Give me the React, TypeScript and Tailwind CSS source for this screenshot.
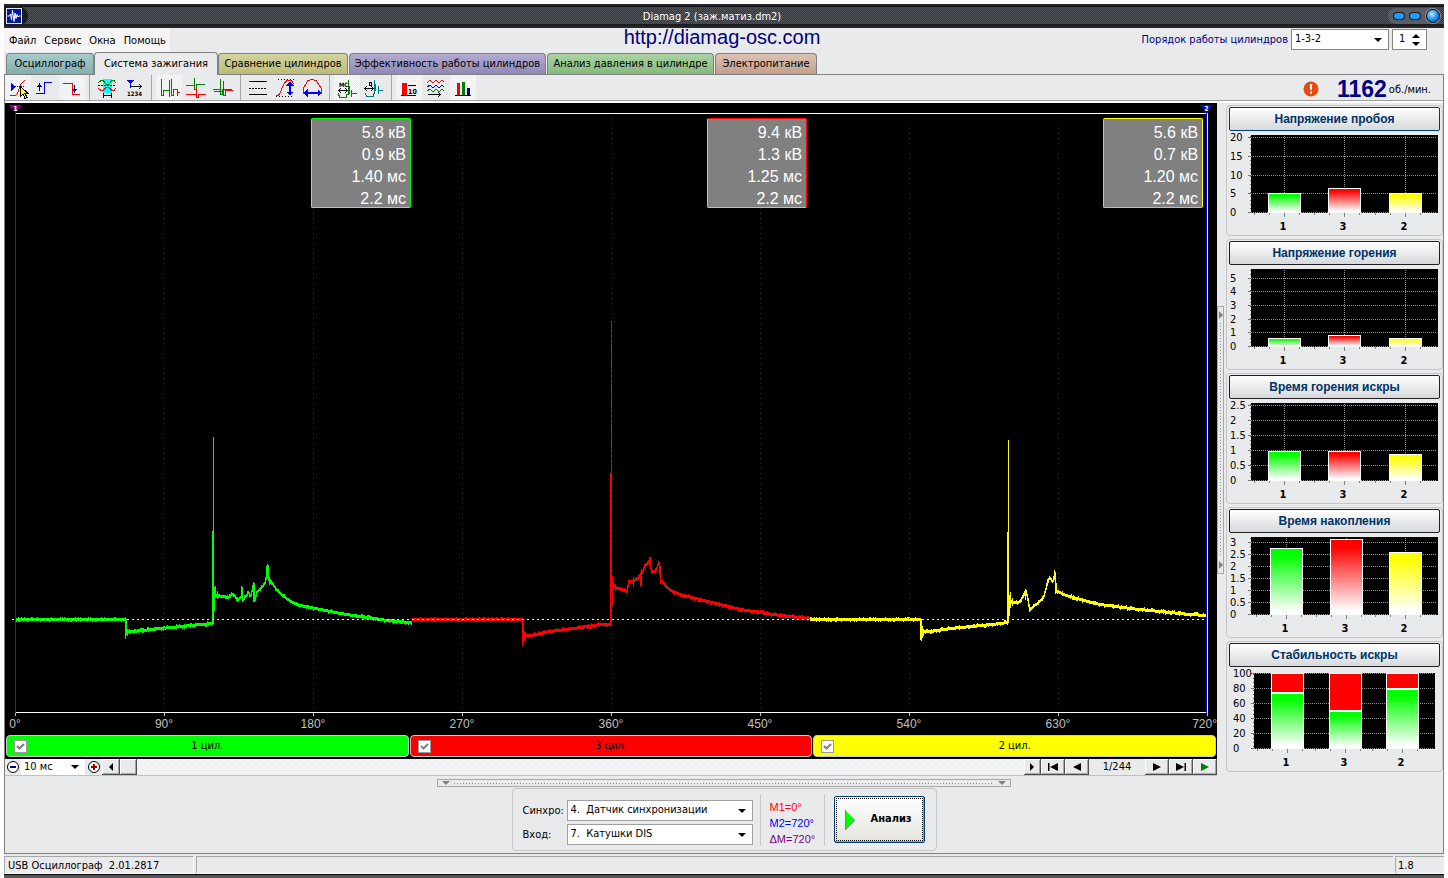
import React from "react";

type Pt = [number, number];
type Spike = [number, number, number];

const GREEN: Pt[] = [
  [15, 619], [125, 619], [126, 631], [132, 631], [160, 628], [200, 624], [212, 623], [214, 596], [217, 595], [222, 596],
  [228, 597], [231, 594], [234, 595], [237, 600], [240, 597], [241, 588], [242, 600], [245, 596], [248, 592], [250, 595],
  [252, 586], [253, 583], [254, 600], [256, 592], [260, 588], [264, 583], [266, 572], [267, 565], [268, 578], [269, 583],
  [270, 580], [275, 588], [280, 593], [290, 601], [300, 605], [320, 609], [340, 613], [360, 616], [380, 619], [395, 621], [412, 622],
];
const RED: Pt[] = [
  [412, 619], [522, 619], [523, 635], [530, 635], [550, 631], [580, 627], [600, 624], [610, 624], [612, 583], [616, 588],
  [620, 588], [626, 591], [628, 581], [633, 581], [640, 575], [644, 566], [648, 562], [649, 558], [650, 568], [652, 572],
  [655, 570], [658, 563], [659, 566], [660, 580], [665, 585], [670, 590], [680, 594], [700, 599], [720, 604], [740, 609],
  [760, 612], [780, 615], [800, 617], [810, 618],
];
const YELLOW: Pt[] = [
  [810, 619], [920, 619], [921, 631], [930, 631], [950, 628], [980, 625], [1000, 623], [1007, 622], [1010, 600], [1012, 602],
  [1018, 602], [1022, 597], [1025, 590], [1027, 598], [1029, 609], [1032, 607], [1040, 600], [1043, 596], [1047, 581], [1049, 577],
  [1052, 581], [1054, 572], [1055, 583], [1056, 590], [1060, 592], [1066, 595], [1080, 599], [1100, 604], [1130, 608], [1160, 611],
  [1190, 614], [1206, 615],
];
const GREEN_SPIKES: Spike[] = [
  [125, 619, 639], [126, 626, 635], [127, 629, 636], [129, 629, 634], [212, 531, 624], [213, 437, 624], [214, 587, 606], [215, 586, 596],
  [217, 591, 599], [241, 587, 595], [253, 582, 602], [266, 566, 580], [267, 564, 578],
];
const RED_SPIKES: Spike[] = [
  [522, 619, 646], [523, 627, 642], [524, 631, 641], [525, 632, 639], [610, 473, 625], [611, 321, 593], [612, 576, 589], [613, 582, 590],
  [615, 584, 591], [633, 577, 587], [640, 572, 586], [641, 569, 587], [649, 558, 566], [659, 562, 575], [660, 575, 584],
];
const YELLOW_SPIKES: Spike[] = [
  [920, 619, 640], [921, 622, 641], [922, 626, 638], [923, 629, 636], [1007, 532, 623], [1008, 440, 622], [1009, 595, 613], [1010, 592, 606],
  [1012, 598, 606], [1025, 589, 600], [1054, 570, 580], [1055, 580, 594], [1056, 583, 593],
];

function trace(points: Pt[], spikes: Spike[], seed: number): string {
  let s = seed;
  const rand = () => {
    s = (s * 1103515245 + 12345) % 2147483648;
    return s / 2147483648;
  };
  let d = "";
  let prev = points[0][1];
  for (let i = 0; i < points.length - 1; i++) {
    const [x0, y0] = points[i];
    const [x1, y1] = points[i + 1];
    for (let x = x0; x < x1; x++) {
      const y = Math.round(y0 + ((y1 - y0) * (x - x0)) / (x1 - x0));
      const top = Math.min(y - 1, prev) - (rand() > 0.82 ? 1 : 0);
      const bottom = Math.max(y + 2, prev + 1) + (rand() > 0.82 ? 1 : 0);
      d += `M${x - 4.5} ${top - 103}V${bottom - 103}`;
      prev = y;
    }
  }
  for (const [x, a, b] of spikes) d += `M${x - 4.5} ${a - 103}V${b - 103}`;
  return d;
}

const DITHER = "bg-[repeating-conic-gradient(#ffffff_0_25%,#e9eaec_0_50%)] bg-[length:2px_2px]";

function Caret({ className = "" }: { className?: string }) {
  return (
    <svg className={`pointer-events-none h-1 w-2 ${className}`} viewBox="0 0 8 4" aria-hidden="true">
      <path d="M0 0H8L4 4Z" fill="#000" />
    </svg>
  );
}

function Picker({ label, value, options, className }: { label: string; value: string; options: string[]; className: string }) {
  return (
    <span className={`relative flex items-center bg-white ${className}`}>
      <select aria-label={label} defaultValue={value} className="h-full w-full appearance-none bg-transparent pl-[3px] pr-4 outline-none">
        {options.map((o) => (
          <option key={o} value={o}>{o}</option>
        ))}
      </select>
      <Caret className="absolute right-1.5" />
    </span>
  );
}

/* ---------- Title bar and menu ---------- */

function TitleBar() {
  return (
    <header className="relative flex h-6 items-center justify-center border-y-2 border-[#26272a] bg-[repeating-conic-gradient(#33353a_0_25%,#55585d_0_50%)] bg-[length:2px_2px] pr-6 pt-0.5 text-[11px] text-white shadow-[inset_0_1px_0_#101112,inset_0_-2px_0_#1c1d1f]">
      <span className="absolute left-0 top-0 flex h-5 w-6 items-center rounded-r-full bg-[#1b1c1e]">
        <svg className="ml-0.5 h-4 w-4" viewBox="0 0 16 16" aria-hidden="true">
          <rect x="0.5" y="0.5" width="15" height="15" fill="#0018a0" stroke="#dfe6ff" />
          <path d="M1.500 8H3.500L4.500 6L5.500 12L6.500 2.500L8 13.500L9 5L10 10.500L11 6.500L12 9L13 8H14.500" fill="none" stroke="#fff" />
        </svg>
      </span>
      <h1>Diamag 2 (заж.матиз.dm2)</h1>
      <span className="absolute right-1 top-0.5 flex h-4 items-center gap-1.5 rounded-full bg-[#5a5d63] pl-1.5">
        <button aria-label="Свернуть" className="h-1.5 w-2.5 rounded-sm bg-[#1b9dff] shadow-[0_0_0_1px_#12161c]" />
        <button aria-label="Развернуть" className="h-1.5 w-2.5 rounded-sm bg-[#1b9dff] shadow-[0_0_0_1px_#12161c]" />
        <button aria-label="Закрыть" className="h-3.5 w-3.5 rounded-full border border-[#12161c] bg-[radial-gradient(circle_at_40%_35%,#bfe4ff,#1187f0_55%,#0850a8)] shadow-[0_0_0_1px_#8a8e95]" />
      </span>
    </header>
  );
}

function MenuRow() {
  return (
    <div className="grid h-6 grid-cols-[1fr_auto_1fr] items-start">
      <nav className="flex h-6 w-[166px] items-center gap-2 bg-[#f5f5f5] pl-[5px] pt-0.5 text-[11px]">
        {["Файл", "Сервис", "Окна", "Помощь"].map((m) => (
          <button key={m}>{m}</button>
        ))}
      </nav>
      <a href="http://diamag-osc.com" className="-mt-[5px] pr-1 pt-0.5 font-[Liberation_Sans] text-[20px] leading-6 text-[#000080]">
        http://diamag-osc.com
      </a>
      <div className="flex items-center justify-end gap-[3px] pr-[17px] pt-px text-[11px]">
        <span className="pt-0.5 text-[#000080]">Порядок работы цилиндров</span>
        <Picker label="Порядок работы цилиндров" value="1-3-2" options={["1-3-2", "1-2-3"]} className="h-[21px] w-[98px] border border-[#858585]" />
        <span className="relative flex h-[21px] w-[35px] items-center border border-[#858585] bg-white">
          <input aria-label="Цилиндр" defaultValue="1" className="w-full bg-transparent pl-1.5 outline-none" />
          <svg className="absolute right-1.5 h-3 w-2" viewBox="0 0 8 12" aria-hidden="true">
            <path d="M4 0L8 4H0ZM4 12L0 8H8Z" fill="#000" />
          </svg>
        </span>
      </div>
    </div>
  );
}

const TABS: [string, string][] = [
  ["Осциллограф", "w-[88px] h-[21px] from-[#a9cccc] to-[#84adad]"],
  ["Система зажигания", "w-[124px] h-[23px] from-[#e9eaec] to-[#e9eaec]"],
  ["Сравнение цилиндров", "w-[130px] h-[21px] from-[#d3d3a0] to-[#bcbc78]"],
  ["Эффективность работы цилиндров", "w-[197px] h-[21px] from-[#b3abd0] to-[#9089b5]"],
  ["Анализ давления в цилиндре", "w-[167px] h-[21px] from-[#abd3a4] to-[#86b97b]"],
  ["Электропитание", "w-[102px] h-[21px] from-[#dcc3b4] to-[#c2a08c]"],
];

function Tabs() {
  return (
    <div role="tablist" className="flex h-[23px] items-end border-b border-[#808080] pl-0.5 text-[11px]">
      {TABS.map(([name, look], i) => (
        <button
          key={name}
          role="tab"
          aria-selected={i === 1}
          className={`shrink-0 whitespace-nowrap rounded-t border border-b-0 border-[#808080] bg-linear-to-b ${look} ${i === 1 ? "-mb-px" : ""} ${i > 2 ? "ml-px" : ""}`}
        >
          {name}
        </button>
      ))}
    </div>
  );
}

/* ---------- Toolbar ---------- */

const R = "#ff0000";
const G = "#008000";
const B = "#0000ff";
const N = "#000080";
const K = "#000000";

type Tool = { name: string; on?: boolean; art: React.ReactNode };

const TOOLS: Tool[][] = [
  [
    {
      name: "Курсор",
      on: true,
      art: (
        <>
          <path d="M5 19.500H10C14 19 13 12 16 8L20 4" stroke={R} />
          <path d="M6 10.500H20" stroke={B} strokeDasharray="1 1" />
          <path d="M6 7V15L10 11Z" fill={B} />
          <path d="M15.500 10.500V20.500L18 18L20 22.500L22 21.500L20 17.500H23Z" fill="#ff0" stroke={K} />
        </>
      ),
    },
    { name: "Фронт", art: <><path d="M4 17.500H12.500V6.500H20" stroke={B} /><path d="M7.500 15V8" stroke={N} /><path d="M5 11L7.500 7L10 11Z" fill={N} /></> },
    { name: "Спад", on: true, art: <><path d="M4 7.500H13.500V18.500H21" stroke={R} /><path d="M15.500 9V16" stroke={N} /><path d="M13 13H18L15.500 17Z" fill={N} /></> },
  ],
  [
    {
      name: "Окно",
      art: (
        <>
          <rect x="9" y="3" width="9" height="14" fill="#0ff" />
          <path d="M4 7L7 4.500H9L12 8H15L18 4.500H20L22 7" stroke={G} />
          <path d="M4 9.500H22" stroke={K} strokeDasharray="2 1" />
          <path d="M4 12L7 14.500H9L12 11.500H15L18 14.500H20L22 12" stroke={R} />
          <path d="M9.500 17V22M17.500 17V22M10 19.500H17" stroke={N} />
        </>
      ),
    },
    {
      name: "Нумерация",
      art: (
        <>
          <path d="M6 4H13L9.500 8Z" fill={B} />
          <path d="M9.500 7V12" stroke={B} />
          <path d="M10 10.500H21M18 8L20.500 10.500L18 13" stroke={K} />
          <text x="6" y="20" fontSize="6" fontWeight="700" fill={K}>1234</text>
        </>
      ),
    },
  ],
  [
    { name: "Последовательно", on: true, art: <><path d="M5.500 3V19.500H7.500V14.500H13.500V21V4" stroke={G} /><path d="M15.500 3V19.500H17.500V13.500H21.500V20M22 16.500H24" stroke={R} /></> },
    { name: "Друг под другом", art: <><path d="M3 9.500H11.500V2V13H13.500V8.500H22" stroke={G} /><path d="M3 18.500H13.500V12V21.500H15.500V18.500H23" stroke={R} /></> },
    { name: "Наложение", art: <><path d="M3 13.500H10.500V3V18.500H12.500V13.500H22" stroke={G} /><path d="M4 15.500H13.500V5V19.500H15.500V14.500H23" stroke={R} /></> },
  ],
  [
    { name: "Линии", art: <><path d="M4 5.500H22M4 18.500H22" stroke={K} /><path d="M4 12.500H22" stroke={K} strokeDasharray="2 1" /></> },
    { name: "Амплитуда", art: <><path d="M4 20C11 20 9 5 16 4.500H19L22 8" stroke={R} /><path d="M6 3.500H22M4 20.500H20" stroke={K} strokeDasharray="1 2" /><path d="M18 9V17" stroke={B} strokeWidth="2" /><path d="M14 9.500L18 5L22 9.500ZM14 15.500L18 20L22 15.500Z" fill={B} /></> },
    { name: "Период", art: <><path d="M4.500 18V12L9 4.500L13 3.500L17 4.500L22 12V18" stroke={R} /><path d="M8 17H19" stroke={B} strokeWidth="2" /><path d="M4 17L8.500 13V21ZM23 17L18.500 13V21Z" fill={B} /></> },
  ],
  [
    { name: "Миллисекунды", on: true, art: <><path d="M4 17.500L6 21.500H12.500V18.500H14.500V4M15.500 10V18M17.500 14V21M18 17.500H23" stroke={G} /><path d="M5 14.500H13M7 12L4.500 14.500L7 17M11 12L13.500 14.500L11 17" stroke={K} /><text x="5" y="11" fontSize="6" fontWeight="700" fill={K}>МС</text></> },
    { name: "Градусы", art: <><path d="M4 17.500L6 20.500H12.500V17.500H13.500V4M14.500 8V15M17.500 10V18M18 14.500H22" stroke="#008080" /><path d="M4 12.500H12M6 10L3.500 12.500L6 15M10 10L12.500 12.500L10 15" stroke={K} /><rect x="8.500" y="6.500" width="2" height="3" stroke={K} /></> },
  ],
  [
    { name: "Значения", on: true, art: <><rect x="6" y="7" width="5" height="12" fill={R} /><path d="M5 19.500H20M12 9.500H20" stroke={K} /><text x="12" y="18" fontSize="7" fontWeight="700" fill={K}>10</text></> },
    { name: "Прокрутка", art: <><path d="M4 7L7 4L10 7L13 4L16 7L19 4L21 6" stroke={R} /><path d="M4 11L7 9L10 12L13 9L16 12L19 9L21 11" stroke={B} /><path d="M4 15L7 13L10 16L13 13L16 16L19 13L21 15" stroke={G} /><path d="M5 18.500H18M15 16L17.500 18.500L15 21" stroke={K} /></> },
    { name: "Диаграммы", on: true, art: <><rect x="7" y="7" width="3" height="12" fill={R} /><rect x="12" y="6" width="3" height="13" fill={G} /><rect x="17" y="12" width="3" height="7" fill={N} /><path d="M5 19.500H21" stroke={K} /></> },
  ],
];

function Toolbar() {
  return (
    <div className="flex h-[28px] items-start justify-between border-b-2 border-white shadow-[inset_0_-1px_0_#a0a0a0]">
      <div className="flex">
        {TOOLS.map((group, g) => (
          <div key={g} className={`flex gap-px ${g ? "ml-1 border-l border-[#a8a8a8] pl-1" : ""}`}>
            {group.map((t) => (
              <button key={t.name} aria-label={t.name} aria-pressed={!!t.on} className={`h-[25px] w-[26px] ${t.on ? DITHER : ""}`}>
                <svg className="h-[25px] w-[26px]" viewBox="0 -1 26 25" fill="none" shapeRendering="crispEdges" aria-hidden="true">
                  {t.art}
                </svg>
              </button>
            ))}
          </div>
        ))}
      </div>
      <div className="flex h-[25px] items-center pr-3 pt-0.5">
        <svg className="mr-[18px] h-4 w-4" viewBox="0 0 16 16" aria-hidden="true">
          <circle cx="8" cy="8" r="7.500" fill="#e8490f" />
          <path d="M6.800 3H9.200L8.800 9H7.200ZM7 10.500H9V12.500H7Z" fill="#fff" />
        </svg>
        <strong className="font-[Liberation_Sans] text-[23px] leading-6 text-[#000080]">1162</strong>
        <span className="ml-0.5 pt-1 text-[11px]">об./мин.</span>
      </div>
    </div>
  );
}

/* ---------- Oscillogram ---------- */

const READOUTS = [
  { rows: ["5.8 кВ", "0.9 кВ", "1.40 мс", "2.2 мс"], look: "left-[25.25%] border-t-[#00ff00] border-r-[#00ff00]" },
  { rows: ["9.4 кВ", "1.3 кВ", "1.25 мс", "2.2 мс"], look: "left-[57.93%] border-t-[#ff0000] border-r-[#ff0000]" },
  { rows: ["5.6 кВ", "0.7 кВ", "1.20 мс", "2.2 мс"], look: "left-[90.6%] border-t-[#ffff00] border-r-[#ffff00]" },
];

function Oscillogram() {
  const ticks = [0, 1, 2, 3, 4, 5, 6, 7, 8];
  return (
    <div className="relative">
      <svg className="block w-full" viewBox="0 0 1212 632" fill="none" shapeRendering="crispEdges">
        <path d={trace(GREEN, GREEN_SPIKES, 7)} stroke="#00ff00" />
        <path d={trace(RED, RED_SPIKES, 21)} stroke="#ff0000" />
        <path d={trace(YELLOW, YELLOW_SPIKES, 99)} stroke="#ffff00" />
        {ticks.slice(1, 8).map((i) => (
          <path key={i} d={`M${10.5 + i * 149} 15V609`} stroke="#30300c" strokeDasharray="1 4" />
        ))}
        <path d="M7 516.500H1202" stroke="#fff" strokeDasharray="2 3" />
        <path d="M10 10.500H1203M10 609.500H1203M1202.500 10V610" stroke="#fff" />
        <path d="M10.500 8V610" stroke="#800080" />
        <path d="M1201.500 8V610" stroke="#0000ff" />
        <path d="M3 2H18L10.500 9Z" fill="#800080" />
        <path d="M1194 2H1209L1201.500 9Z" fill="#0000ff" />
        <g fill="#fff" fontSize="7" fontWeight="700" textAnchor="middle">
          <text x="10.500" y="8">1</text>
          <text x="1201.500" y="8">2</text>
        </g>
        <g fill="#c0c0c0" fontSize="12" fontFamily="Liberation Sans, sans-serif">
          {ticks.map((i) => (
            <React.Fragment key={i}>
              <path d={`M${10.5 + i * 149} 610V613`} stroke="#c0c0c0" />
              <text x={i === 8 ? 1212 : 10 + i * 149} y="625" textAnchor={i === 8 ? "end" : "middle"}>{`${i * 90}°`}</text>
            </React.Fragment>
          ))}
        </g>
      </svg>
      {READOUTS.map((r) => (
        <div key={r.look} className={`absolute top-[15px] h-[90px] w-[100px] rounded-xs border border-[#c0c0c0] bg-[#808080] pr-1 pt-[3px] text-right font-[Liberation_Sans] text-[16px] leading-[22px] text-white ${r.look}`}>
          {r.rows.map((v, i) => (
            <div key={i}>{v}</div>
          ))}
        </div>
      ))}
    </div>
  );
}

function CylinderBar() {
  const items = [
    ["1 цил.", "bg-[#00ff00]"],
    ["3 цил.", "bg-[#ff0000]"],
    ["2 цил.", "bg-[#ffff00]"],
  ];
  return (
    <div className="flex gap-px bg-black px-px pb-0.5 text-[11px]">
      {items.map(([name, color]) => (
        <label key={name} className={`grid h-[22px] flex-1 grid-cols-[32px_1fr_32px] items-center rounded-sm border border-[#c8c8c8] ${color}`}>
          <span className="relative ml-[7px] h-[13px] w-[13px]">
            <input type="checkbox" defaultChecked className="block h-[13px] w-[13px] appearance-none border border-[#999] bg-white" />
            <svg className="pointer-events-none absolute inset-0" viewBox="0 0 13 13" aria-hidden="true">
              <path d="M3 6L5.500 8.500L10 4" fill="none" stroke="#808080" strokeWidth="2.200" />
            </svg>
          </span>
          <span className="text-center">{name}</span>
        </label>
      ))}
    </div>
  );
}

const KEY = "flex h-4 items-center justify-center border-b border-r border-[#505050] bg-[#e9eaec] shadow-[inset_1px_1px_0_#fff,inset_-1px_-1px_0_#a8a8a8]";

function Key({ name, width, d, fill = "#000" }: { name: string; width: string; d: string; fill?: string }) {
  return (
    <button aria-label={name} className={`${KEY} ${width}`}>
      <svg className="h-2 w-3" viewBox="0 0 12 8" aria-hidden="true">
        <path d={d} fill={fill} />
      </svg>
    </button>
  );
}

function Zoom({ name, plus }: { name: string; plus?: boolean }) {
  return (
    <button aria-label={name} className="h-4 w-4">
      <svg viewBox="0 0 16 16" fill="none" aria-hidden="true">
        <circle cx="8" cy="8" r="5.500" stroke="#000" fill="#fff" />
        {plus ? <path d="M5 8H11M8 5V11" stroke="#900000" strokeWidth="2" /> : <path d="M5 8H11" stroke="#000090" strokeWidth="2" />}
      </svg>
    </button>
  );
}

function ScrollRow() {
  return (
    <div className="flex h-[17px] border-b border-[#c0c0c0] text-[11px]">
      <Zoom name="Уменьшить" />
      <Picker label="Масштаб" value="10 мс" options={["5 мс", "10 мс", "20 мс"]} className="h-4 w-16" />
      <span className="w-px" />
      <Zoom name="Увеличить" plus />
      <Key name="Влево" width="w-[18px]" d="M8 0V8L4 4Z" />
      <button aria-label="Ползунок" className={`${KEY} w-[17px]`} />
      <span className={`h-4 flex-1 ${DITHER}`} />
      <Key name="Вправо" width="w-[17px]" d="M4 0V8L8 4Z" />
      <Key name="Первый" width="w-6" d="M1 0H2.500V8H1ZM11 0V8L3 4Z" />
      <Key name="Предыдущий" width="w-6" d="M10 0V8L2 4Z" />
      <span className="w-14 self-center text-center">1/244</span>
      <Key name="Следующий" width="w-6" d="M2 0V8L10 4Z" />
      <Key name="Последний" width="w-6" d="M1 0V8L9 4ZM9.500 0H11V8H9.500Z" />
      <Key name="Воспроизвести" width="w-6" d="M2 0V8L10 4Z" fill="#008000" />
    </div>
  );
}

/* ---------- Side charts ---------- */

type Bar = { x: number; top: number; color: string };
type ChartSpec = { title: string; grid: [string, number][]; mids: number[]; bars: Bar[] };

const CHARTS: ChartSpec[] = [
  {
    title: "Напряжение пробоя",
    grid: [["20", 6], ["15", 25], ["10", 44], ["5", 62], ["0", 81]],
    mids: [55, 115, 176],
    bars: [{ x: 39, top: 62, color: "g" }, { x: 99, top: 57, color: "r" }, { x: 160, top: 62, color: "y" }],
  },
  {
    title: "Напряжение горения",
    grid: [["5", 13], ["4", 26], ["3", 40], ["2", 54], ["1", 67], ["0", 81]],
    mids: [55, 115, 176],
    bars: [{ x: 39, top: 73, color: "g" }, { x: 99, top: 70, color: "r" }, { x: 160, top: 73, color: "y" }],
  },
  {
    title: "Время горения искры",
    grid: [["2.5", 6], ["2", 21], ["1.5", 36], ["1", 51], ["0.5", 66], ["0", 81]],
    mids: [55, 115, 176],
    bars: [{ x: 39, top: 52, color: "g" }, { x: 99, top: 52, color: "r" }, { x: 160, top: 55, color: "y" }],
  },
  {
    title: "Время накопления",
    grid: [["3", 9], ["2.5", 21], ["2", 33], ["1.5", 45], ["1", 57], ["0.5", 69], ["0", 81]],
    mids: [57, 117, 176],
    bars: [{ x: 41, top: 15, color: "g" }, { x: 101, top: 6, color: "r" }, { x: 160, top: 19, color: "y" }],
  },
  {
    title: "Стабильность искры",
    grid: [["100", 6], ["80", 21], ["60", 36], ["40", 51], ["20", 66], ["0", 81]],
    mids: [58, 116, 173],
    bars: [{ x: 42, top: 26, color: "g" }, { x: 100, top: 44, color: "g" }, { x: 157, top: 22, color: "g" }],
  },
];

function Chart({ spec, index }: { spec: ChartSpec; index: number }) {
  const stacked = index === 4;
  const left = stacked ? 25 : 22;
  const right = stacked ? 206 : 209;
  const top = stacked ? 6 : 4;
  return (
    <section className="h-[131px] rounded-[4px] border border-[#c4c5c8] px-0.5 pt-px">
      <button className={`block h-6 w-full rounded-xs border bg-linear-to-b from-white to-[#d6d8db] font-[Liberation_Sans] text-[12px] font-bold text-[#003366] ${index === 0 ? "border-[#003c74]" : "border-[#202020]"}`}>
        {spec.title}
      </button>
      <svg className="block w-full" viewBox="0 0 211 103" fill="none" shapeRendering="crispEdges">
        <rect x={left} y={top} width={right - left} height={82 - top} fill="#000" />
        {spec.grid.map(([label, y]) => (
          <React.Fragment key={label}>
            <path d={`M${left} ${y + 0.5}H${right - 2}`} stroke="#909090" strokeDasharray="1 1" />
            <path d={`M${left - 3} ${y + 0.5}H${left}`} stroke="#707070" />
            <text x={stacked ? 4 : 1} y={y + 4} fontSize="11" fill="#000">{label}</text>
          </React.Fragment>
        ))}
        <path d={`M${left - 0.5} ${top + 1}V82`} stroke="#707070" strokeDasharray="1 3" />
        {spec.mids.map((x, i) => (
          <React.Fragment key={x}>
            <path d={`M${x + 0.5} ${top + 1}V82`} stroke="#909090" strokeDasharray="1 1" />
            <path d={`M${x + 0.5} 82V86M${x - 14.5} 82V84M${x + 15.5} 82V84M${x - 29.5} 82V84`} stroke="#808080" />
            <text x={x - 1} y="99" fontSize="11" fontWeight="700" textAnchor="middle" fill="#000">{["1", "3", "2"][i]}</text>
          </React.Fragment>
        ))}
        {spec.bars.map((b) => (
          <React.Fragment key={b.x}>
            {stacked && <rect x={b.x + 0.5} y={6.5} width="32" height={b.top - 7} fill="#ff0000" stroke="#fff" />}
            <rect x={b.x + 0.5} y={b.top + 0.5} width="32" height={81 - b.top} fill={`url(#fade-${b.color})`} stroke="#fff" />
          </React.Fragment>
        ))}
      </svg>
    </section>
  );
}

function Gradients() {
  const colors = [["g", "#00ff00"], ["r", "#ff0000"], ["y", "#ffff00"]];
  return (
    <svg className="absolute h-0 w-0" aria-hidden="true">
      <defs>
        {colors.map(([id, c]) => (
          <linearGradient key={id} id={`fade-${id}`} x1="0" y1="0" x2="0" y2="1">
            <stop offset="0.100" stopColor={c} />
            <stop offset="0.950" stopColor="#fff" />
          </linearGradient>
        ))}
      </defs>
    </svg>
  );
}

/* ---------- Bottom panel ---------- */

const SYNC = "4.\u00a0\u00a0Датчик синхронизации";
const INPUT = "7.\u00a0\u00a0Катушки DIS";

function ControlPanel() {
  return (
    <div className="flex h-[63px] items-center rounded-[4px] border border-[#c4c5c8] pl-2.5 pr-[11px] text-[11px]">
      <div className="grid grid-cols-[44px_186px] items-center gap-y-[3px] pt-1.5">
        <span className="pt-0.5">Синхро:</span>
        <Picker label="Синхро" value={SYNC} options={[SYNC]} className="h-[21px] border border-[#a0a0a0]" />
        <span className="pt-0.5">Вход:</span>
        <Picker label="Вход" value={INPUT} options={[INPUT]} className="h-[21px] border border-[#a0a0a0]" />
      </div>
      <div className="ml-[7px] flex h-[50px] w-[65px] flex-col border-x border-[#c4c5c8] pl-[9px] pt-1 font-[Liberation_Sans] leading-4">
        <span className="text-[#ff0000]">M1=0°</span>
        <span className="text-[#0000ff]">M2=720°</span>
        <span className="text-[#800080]">ΔM=720°</span>
      </div>
      <button className="ml-[9px] h-[47px] w-[91px] rounded-xs border border-[#003c74] bg-linear-to-b from-white to-[#e4e4de] p-px font-bold shadow-[inset_-1px_-1px_0_#a09c90]">
        <span className="flex h-full items-center border border-dotted border-black pl-2">
          <svg className="h-5 w-2.5" viewBox="0 0 10 20" aria-hidden="true">
            <path d="M0 0L10 10L0 20Z" fill="#00ff00" />
            <path d="M0.500 0V20L10 10" fill="none" stroke="#808080" />
          </svg>
          <span className="ml-4">Анализ</span>
        </span>
      </button>
    </div>
  );
}

export default function App() {
  return (
    <div className="flex min-h-screen flex-col bg-white px-1 pt-1 font-['DejaVu_Sans_Condensed','Noto_Sans',sans-serif] text-black">
      <Gradients />
      <TitleBar />
      <div className="flex flex-1 flex-col bg-[#e9eaec]">
        <MenuRow />
        <Tabs />
        <div className="flex flex-1 flex-col border-x border-b border-[#808080]">
          <Toolbar />
          <div className="flex">
            <main className="min-w-0 flex-1">
              <div className="bg-black">
                <Oscillogram />
                <CylinderBar />
              </div>
              <ScrollRow />
            </main>
            <div className="flex w-[9px] items-center">
              <div className="flex h-[268px] w-[7px] flex-col items-center justify-between border border-[#a8a8a8] py-1">
                <svg className="h-2 w-1" viewBox="0 0 4 8" aria-hidden="true"><path d="M0 0V8L4 4Z" fill="#808080" /></svg>
                <span className="my-1 w-px flex-1 bg-[repeating-linear-gradient(#909090_0_1px,transparent_1px_3px)]" />
                <svg className="h-2 w-1" viewBox="0 0 4 8" aria-hidden="true"><path d="M0 0V8L4 4Z" fill="#808080" /></svg>
              </div>
            </div>
            <aside className="flex w-[217px] flex-col gap-[3px] pt-0.5">
              {CHARTS.map((c, i) => (
                <Chart key={c.title} spec={c} index={i} />
              ))}
            </aside>
          </div>
          <div className="flex flex-1 flex-col items-center gap-px pb-0.5 pt-[3px]">
            <div className="flex h-2 w-[574px] items-center justify-between border border-[#a8a8a8] px-1">
              <svg className="h-1 w-2" viewBox="0 0 8 4" aria-hidden="true"><path d="M0 0H8L4 4Z" fill="#808080" /></svg>
              <span className="mx-1 h-px flex-1 bg-[repeating-linear-gradient(90deg,#909090_0_1px,transparent_1px_3px)]" />
              <svg className="h-1 w-2" viewBox="0 0 8 4" aria-hidden="true"><path d="M0 0H8L4 4Z" fill="#808080" /></svg>
            </div>
            <ControlPanel />
          </div>
        </div>
        <footer className="mt-0.5 flex h-[18px] gap-0.5 border-b border-white text-[11px] leading-[18px]">
          <span className="w-[190px] whitespace-pre border-l border-t border-r border-[#a8a8a8] border-r-white pl-[3px]">USB Осциллограф  2.01.2817</span>
          <span className="flex-1 border-l border-t border-[#a8a8a8]" />
          <span className="w-[49px] border-l border-t border-[#a8a8a8] pl-0.5">1.8</span>
        </footer>
      </div>
      <div className="h-1 border-t border-black bg-[#55585b]" />
    </div>
  );
}
